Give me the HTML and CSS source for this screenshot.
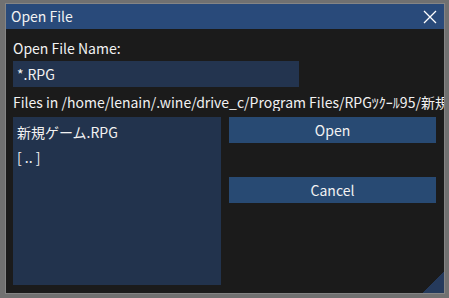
FILE: index.html
```html
<!DOCTYPE html>
<html lang="en">
<head>
    <meta charset="UTF-8">
    <title>Open File</title>
    <link rel="stylesheet" href="styles.css">
</head>
<body>
    <div class="window">
        <div class="title-bar">
            <span class="title">Open File</span>
            <svg class="close" width="14" height="14" viewBox="0 0 14 14">
                <path d="M1 1 L13 13 M13 1 L1 13" stroke="#ffffff" stroke-width="1.3" fill="none"/>
            </svg>
        </div>
        <div class="content">
            <div class="label">Open File Name:</div>
            <div class="input">*.RPG</div>
            <div class="label path">Files in /home/lenain/.wine/drive_c/Program Files/RPGﾂｸｰﾙ95/新規</div>
            <div class="browser">
                <div class="file-list">
                    <div class="file-item">新規ゲーム.RPG</div>
                    <div class="file-item">[ .. ]</div>
                </div>
                <div class="actions">
                    <button class="btn">Open</button>
                    <button class="btn">Cancel</button>
                </div>
            </div>
        </div>
        <div class="resize-grip"></div>
    </div>
</body>
</html>
```

FILE: styles.css
```css
* {
    margin: 0;
    padding: 0;
    box-sizing: border-box;
    font-family: "Noto Sans CJK JP", "Noto Sans", sans-serif;
}

body {
    background-color: #717171;
    color: #f2f2f2;
    font-size: 14px;
}

.window {
    position: relative;
    margin: 3px 0 0 5px;
    width: 440px;
    height: 291px;
    background: #1b1b1b;
    border: 1px solid #858585;
    overflow: hidden;
}

.title-bar {
    display: flex;
    align-items: center;
    justify-content: space-between;
    height: 25px;
    padding: 0 7px 0 5px;
    background: #294a7a;
}

.title {
    line-height: 25px;
}

.content {
    display: flex;
    flex-direction: column;
    padding: 10px 0 0 7px;
}

.label {
    line-height: 18px;
    height: 18px;
    white-space: nowrap;
}

.input {
    width: 286px;
    height: 26px;
    margin: 4px 0 6px;
    padding-left: 4px;
    line-height: 26px;
    background: #23344f;
}

.path {
    overflow: hidden;
}

.browser {
    display: flex;
    gap: 8px;
    margin-top: 6px;
}

.file-list {
    width: 208px;
    height: 168px;
    padding: 3px 4px;
    background: #22334d;
}

.file-item {
    line-height: 25px;
}

.actions {
    display: flex;
    flex-direction: column;
    gap: 34px;
}

.btn {
    width: 207px;
    height: 26px;
    border: none;
    background: #284a73;
    color: #f2f2f2;
    font-size: 14px;
}

/* corner grip */
.resize-grip {
    position: absolute;
    right: 0;
    bottom: 0;
    width: 21px;
    height: 21px;
    background: linear-gradient(135deg, transparent 50%, #253a5c 50%);
}
```
